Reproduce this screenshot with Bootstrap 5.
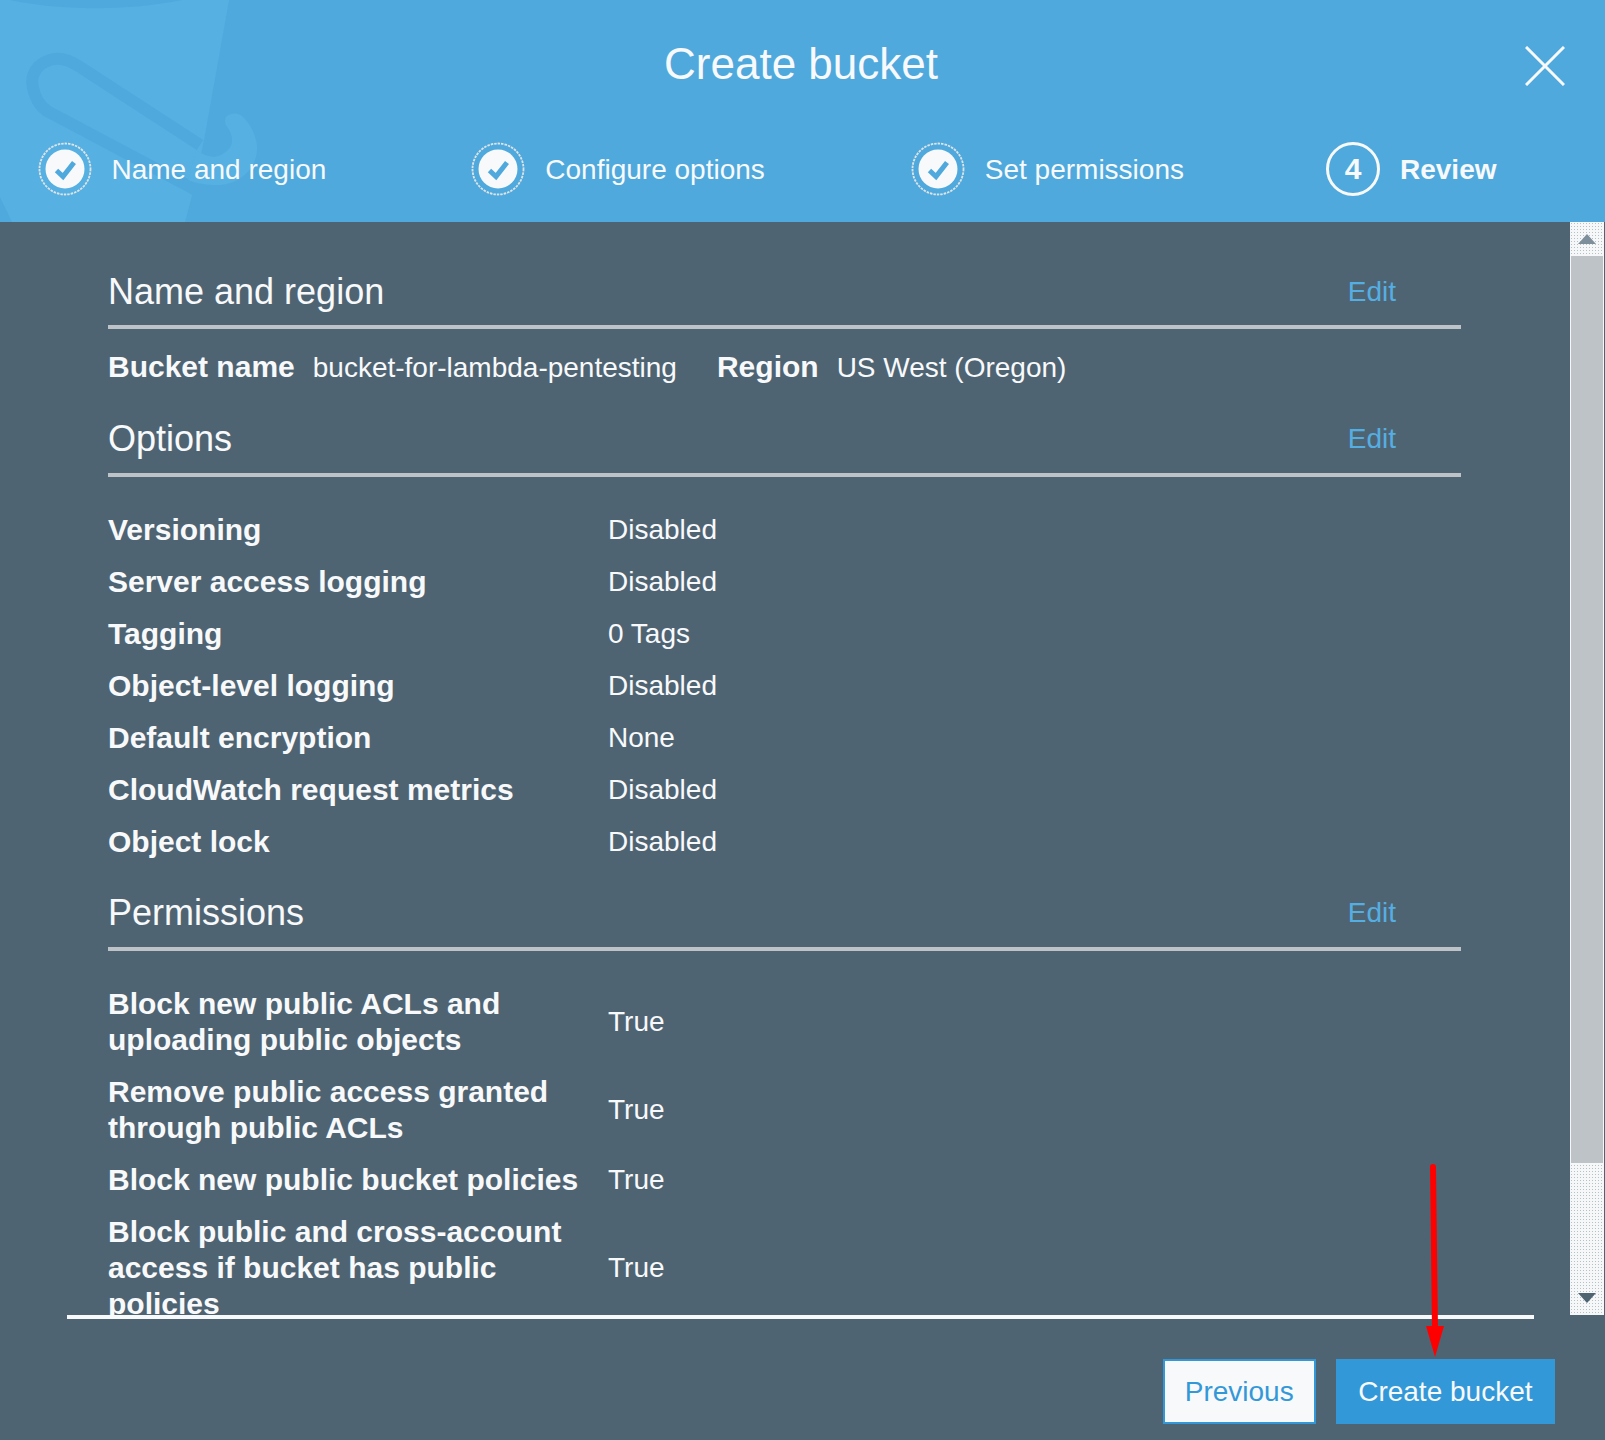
<!DOCTYPE html>
<html lang="en">
<head>
  <meta charset="UTF-8" />
  <meta name="viewport" content="width=device-width, initial-scale=1" />
  <title>Create bucket</title>
  <link href="https://cdn.jsdelivr.net/npm/bootstrap@5.3.0/dist/css/bootstrap.min.css" rel="stylesheet" />
  <style>
    body { background: #4f6473; color: #f8f9fb; font-family: "Liberation Sans", Arial, sans-serif; font-size: 28px; }
    .wizard-page { height: 1440px; }
    .wizard-head { height: 222px; background: #4fa9dd; flex-shrink: 0; }
    .head-art { top: 0; left: 0; }
    .wizard-title { font-size: 44px; line-height: 50px; padding: 39px 3px 0 0; margin: 0; font-weight: 400; }
    .close-x { top: 46px; right: 40px; line-height: 0; }
    .steps { margin-top: 53px; padding-left: 37.5px; }
    .step-item { gap: 20px; height: 54px; }
    .step-item > span { padding-top: 2px; }
    .step-two { margin-left: 145px; }
    .step-three { margin-left: 146px; }
    .step-four { margin-left: 142px; }
    .step-num { width: 54px; height: 54px; border: 3px solid #f8f9fb; border-radius: 50%; font-size: 30px; font-weight: 700; line-height: 48px; }
    .scroll-body { padding: 48px 0 0 108px; }
    .scroll-inner { width: 1353px; }
    .sect-head { font-size: 36px; line-height: 44px; padding: 0 65px 11px 0; border-bottom: 4px solid #bdc3c7; }
    .sect-head a { font-size: 28px; color: #55aee2; text-decoration: none; }
    .sect-gap-a { margin-top: 31px; padding-bottom: 12px; }
    .sect-gap-b { margin-top: 23px; padding-bottom: 12px; }
    .bucket-line { margin-top: 20px; line-height: 36px; gap: 18px; align-items: baseline; }
    .bucket-line .fw-bold { font-size: 30px; }
    .bucket-line .region-key { margin-left: 22px; }
    .prop-list { margin-top: 27px; display: grid; grid-template-columns: 500px 1fr; }
    .prop-key { font-size: 30px; font-weight: 700; line-height: 36px; padding: 8px 0; }
    .prop-val { line-height: 36px; padding: 8px 0; align-self: center; }
    .fake-scroll { width: 34px; flex-shrink: 0; margin-right: 1px; background: #f6f7f8 radial-gradient(#b9c0c4 .7px, transparent .9px) 0 0 / 3px 3px; }
    .scroll-btn { height: 34px; }
    .scroll-thumb { height: 907px; background: #bdc3c7; margin: 0 1px; }
    .wizard-foot { height: 125px; flex-shrink: 0; }
    .foot-line { height: 4px; background: #f8f9fb; margin: 0 71px 0 67px; }
    .foot-btns { padding: 40px 50px 0 0; gap: 20px; }
    .btn-wiz { font-size: 28px; line-height: 61px; padding: 0 20px; border: 2px solid #3398d8; border-radius: 0; height: 65px; }
    .btn-wiz-prev { background: #f8f9fb; color: #3398d8; }
    .btn-wiz-next { background: #3398d8; color: #f8f9fb; padding: 0 20.5px; }
    .mark-arrow { left: 1420px; top: 1160px; line-height: 0; }
  </style>
</head>
<body>
  <div class="wizard-page position-relative d-flex flex-column">

    <div class="wizard-head position-relative overflow-hidden">
      <svg class="head-art position-absolute" width="270" height="222" viewBox="0 0 270 222">
        <!-- bucket -->
        <path d="M0 0H229L204 140L193 192L185 222H12L0 197Z" fill="#56b0e2" />
        <path d="M10 0C60 11 130 11 182 0Z" fill="#4fa9dd" />
        <!-- handle -->
        <path d="M200 145L80 67C68 59 58 57 50 60C36 64 30 76 33 88C35 98 40 106 47 111L196 190" fill="none" stroke="#4fa9dd" stroke-width="12" />
        <path d="M196 150C205 156 212 158 218 156C234 150 236 138 226 125C222 117 230 112 238 114C246 116 258 135 257 150C256 170 238 185 217 185C205 185 196 183 188 180Z" fill="#56b0e2" />
      </svg>
      <h1 class="wizard-title text-center position-relative">Create bucket</h1>
      <div class="close-x position-absolute">
        <svg width="40" height="40" viewBox="0 0 40 40"><path d="M1 1L39 39M39 1L1 39" stroke="#f8f9fb" stroke-width="3" fill="none" /></svg>
      </div>
      <div class="steps d-flex position-relative">
        <div class="step-item d-flex align-items-center">
          <svg width="54" height="54" viewBox="0 0 54 54"><circle cx="27" cy="27" r="25.5" fill="none" stroke="#dfe4e7" stroke-width="1.8" stroke-dasharray="2.5 1" /><circle cx="27" cy="27" r="19.5" fill="#f8f9fb" /><path d="M18.5 28.5L25 34.5L36 20.5" fill="none" stroke="#4fa9dd" stroke-width="5" /></svg>
          <span>Name and region</span>
        </div>
        <div class="step-item step-two d-flex align-items-center">
          <svg width="54" height="54" viewBox="0 0 54 54"><circle cx="27" cy="27" r="25.5" fill="none" stroke="#dfe4e7" stroke-width="1.8" stroke-dasharray="2.5 1" /><circle cx="27" cy="27" r="19.5" fill="#f8f9fb" /><path d="M18.5 28.5L25 34.5L36 20.5" fill="none" stroke="#4fa9dd" stroke-width="5" /></svg>
          <span>Configure options</span>
        </div>
        <div class="step-item step-three d-flex align-items-center">
          <svg width="54" height="54" viewBox="0 0 54 54"><circle cx="27" cy="27" r="25.5" fill="none" stroke="#dfe4e7" stroke-width="1.8" stroke-dasharray="2.5 1" /><circle cx="27" cy="27" r="19.5" fill="#f8f9fb" /><path d="M18.5 28.5L25 34.5L36 20.5" fill="none" stroke="#4fa9dd" stroke-width="5" /></svg>
          <span>Set permissions</span>
        </div>
        <div class="step-item step-four d-flex align-items-center">
          <div class="step-num text-center">4</div>
          <span class="fw-bold">Review</span>
        </div>
      </div>
    </div>

    <div class="d-flex flex-grow-1 overflow-hidden">
      <div class="scroll-body flex-grow-1 overflow-hidden">
        <div class="scroll-inner">
          <div class="sect-head d-flex justify-content-between align-items-center">
            <span>Name and region</span><a href="#">Edit</a>
          </div>
          <div class="bucket-line d-flex">
            <span class="fw-bold">Bucket name</span><span>bucket-for-lambda-pentesting</span>
            <span class="fw-bold region-key">Region</span><span>US West (Oregon)</span>
          </div>

          <div class="sect-head sect-gap-a d-flex justify-content-between align-items-center">
            <span>Options</span><a href="#">Edit</a>
          </div>
          <div class="prop-list">
            <div class="prop-key">Versioning</div><div class="prop-val">Disabled</div>
            <div class="prop-key">Server access logging</div><div class="prop-val">Disabled</div>
            <div class="prop-key">Tagging</div><div class="prop-val">0 Tags</div>
            <div class="prop-key">Object-level logging</div><div class="prop-val">Disabled</div>
            <div class="prop-key">Default encryption</div><div class="prop-val">None</div>
            <div class="prop-key">CloudWatch request metrics</div><div class="prop-val">Disabled</div>
            <div class="prop-key">Object lock</div><div class="prop-val">Disabled</div>
          </div>

          <div class="sect-head sect-gap-b d-flex justify-content-between align-items-center">
            <span>Permissions</span><a href="#">Edit</a>
          </div>
          <div class="prop-list">
            <div class="prop-key">Block new public ACLs and<br>uploading public objects</div><div class="prop-val">True</div>
            <div class="prop-key">Remove public access granted<br>through public ACLs</div><div class="prop-val">True</div>
            <div class="prop-key">Block new public bucket policies</div><div class="prop-val">True</div>
            <div class="prop-key">Block public and cross-account<br>access if bucket has public<br>policies</div><div class="prop-val">True</div>
          </div>
        </div>
      </div>

      <div class="fake-scroll d-flex flex-column">
        <div class="scroll-btn d-flex align-items-center justify-content-center">
          <svg width="18" height="10" viewBox="0 0 18 10"><path d="M9 0L18 10H0Z" fill="#7d8f9b" /></svg>
        </div>
        <div class="scroll-thumb"></div>
        <div class="flex-grow-1"></div>
        <div class="scroll-btn d-flex align-items-center justify-content-center">
          <svg width="18" height="10" viewBox="0 0 18 10"><path d="M0 0H18L9 10Z" fill="#4f6473" /></svg>
        </div>
      </div>
    </div>

    <div class="wizard-foot">
      <div class="foot-line"></div>
      <div class="foot-btns d-flex justify-content-end">
        <button type="button" class="btn btn-wiz btn-wiz-prev">Previous</button>
        <button type="button" class="btn btn-wiz btn-wiz-next">Create bucket</button>
      </div>
    </div>

    <svg class="mark-arrow position-absolute" width="30" height="200" viewBox="0 0 30 200">
      <path d="M13 7L15 170" stroke="#ff0000" stroke-width="6" fill="none" stroke-linecap="round" />
      <path d="M6 166H24L15 197Z" fill="#ff0000" />
    </svg>
  </div>
  <script src="https://cdn.jsdelivr.net/npm/bootstrap@5.3.0/dist/js/bootstrap.bundle.min.js"></script>
</body>
</html>
